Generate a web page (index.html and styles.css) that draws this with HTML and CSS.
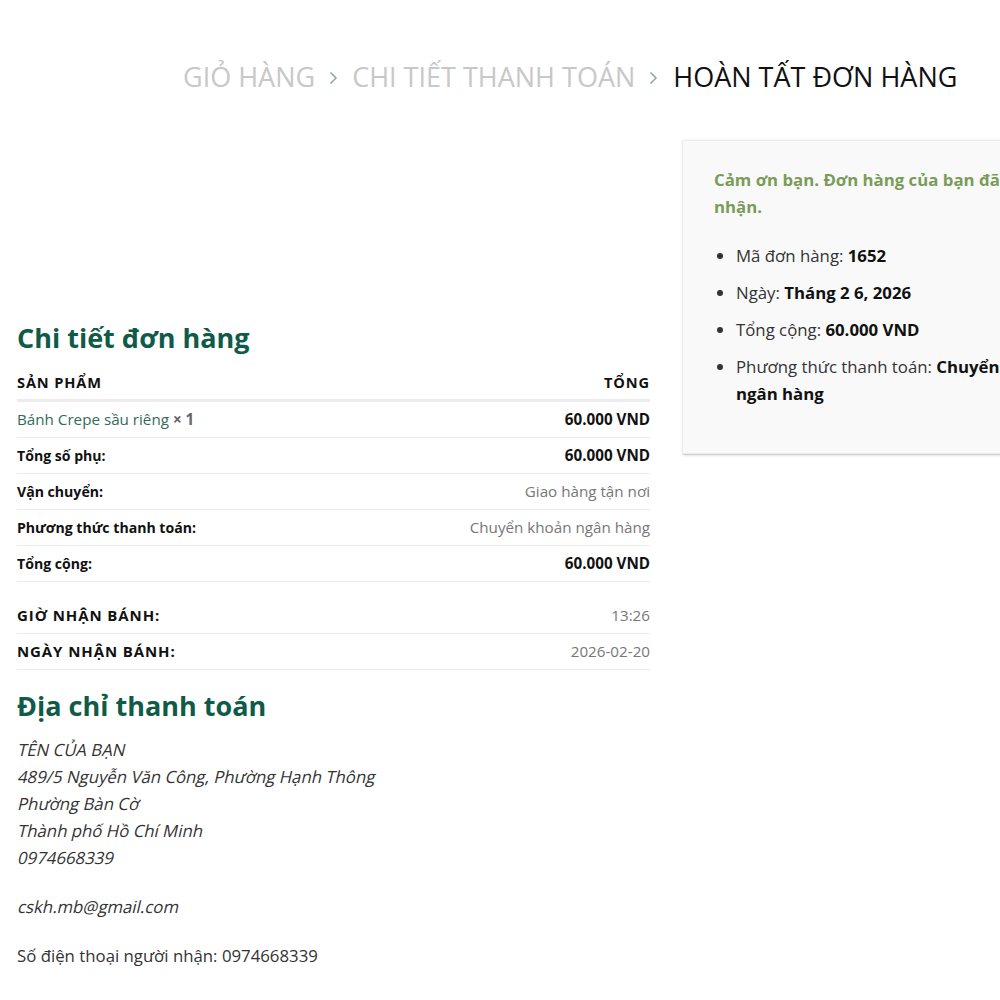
FILE: index.html
```html
<!DOCTYPE html>
<html lang="vi">
<head>
<meta charset="utf-8">
<title>Hoàn tất đơn hàng</title>
<link rel="stylesheet" href="styles.css">
</head>
<body>
<div class="page">
  <nav class="breadcrumbs">
    <span class="crumb">Giỏ hàng</span>
    <svg class="sep" width="9" height="14" viewBox="0 0 9 14" aria-hidden="true"><path d="M1.5 1.5 L7 7 L1.5 12.5" fill="none" stroke="currentColor" stroke-width="1.5"/></svg>
    <span class="crumb">Chi tiết thanh toán</span>
    <svg class="sep" width="9" height="14" viewBox="0 0 9 14" aria-hidden="true"><path d="M1.5 1.5 L7 7 L1.5 12.5" fill="none" stroke="currentColor" stroke-width="1.5"/></svg>
    <span class="crumb current">Hoàn tất đơn hàng</span>
  </nav>

  <div class="row">
    <div class="col-main">
      <section class="order-details">
        <h2 class="section-title">Chi tiết đơn hàng</h2>
        <table class="order-table">
          <thead>
            <tr><th class="left">Sản phẩm</th><th class="right">Tổng</th></tr>
          </thead>
          <tbody>
            <tr>
              <td class="product"><a href="#">Bánh Crepe sầu riêng</a> <strong class="qty">&times;&nbsp;1</strong></td>
              <td class="right"><strong>60.000 VND</strong></td>
            </tr>
          </tbody>
          <tfoot>
            <tr><th class="foot-label">Tổng số phụ:</th><td class="right"><strong>60.000 VND</strong></td></tr>
            <tr><th class="foot-label">Vận chuyển:</th><td class="right muted">Giao hàng tận nơi</td></tr>
            <tr><th class="foot-label">Phương thức thanh toán:</th><td class="right muted">Chuyển khoản ngân hàng</td></tr>
            <tr><th class="foot-label">Tổng cộng:</th><td class="right"><strong>60.000 VND</strong></td></tr>
          </tfoot>
        </table>

        <table class="extra-table">
          <tr><th class="left">Giờ nhận bánh:</th><td class="right muted">13:26</td></tr>
          <tr><th class="left">Ngày nhận bánh:</th><td class="right muted">2026-02-20</td></tr>
        </table>
      </section>

      <section class="billing">
        <h2 class="section-title">Địa chỉ thanh toán</h2>
        <address class="address">
          <span class="line">TÊN CỦA BẠN</span>
          <span class="line">489/5 Nguyễn Văn Công, Phường Hạnh Thông</span>
          <span class="line">Phường Bàn Cờ</span>
          <span class="line">Thành phố Hồ Chí Minh</span>
          <span class="line">0974668339</span>
          <span class="line email">cskh.mb@gmail.com</span>
        </address>
        <p class="phone">Số điện thoại người nhận: 0974668339</p>
      </section>
    </div>

    <aside class="col-side">
      <div class="well">
        <p class="thanks">Cảm ơn bạn. Đơn hàng của bạn đã được nhận.</p>
        <ul class="overview">
          <li>Mã đơn hàng: <strong>1652</strong></li>
          <li>Ngày: <strong>Tháng 2 6, 2026</strong></li>
          <li>Tổng cộng: <strong>60.000 VND</strong></li>
          <li>Phương thức thanh toán: <strong>Chuyển khoản ngân hàng</strong></li>
        </ul>
      </div>
    </aside>
  </div>
</div>
</body>
</html>
```

FILE: styles.css
```css
html, body {
  margin: 0;
  padding: 0;
  overflow-x: hidden;
  background: #fff;
}

body {
  font-family: "Open Sans", "Noto Sans", sans-serif;
  font-size: 16.8px;
  line-height: 27px;
  color: #333;
}

.page {
  width: 1160px;
}

.breadcrumbs {
  display: flex;
  align-items: center;
  gap: 14px;
  padding: 66px 0 0 183px;
  height: 87px;
  box-sizing: border-box;
  font-size: 27px;
  line-height: 28px;
  text-transform: uppercase;
  white-space: nowrap;
}

.crumb {
  color: #c8c8c8;
}

.crumb.current {
  color: #111;
  margin-left: 1px;
}

.sep {
  color: #8fa89d;
  flex: none;
  margin-top: 2px;
}

.row {
  display: flex;
  align-items: flex-start;
  gap: 32px;
  padding: 0 0 0 17px;
  margin-top: 53px;
}

.col-main {
  width: 633px;
  flex: none;
}

.col-side {
  width: 426px;
  flex: none;
}

.section-title {
  margin: 0;
  font-size: 27px;
  line-height: 36px;
  font-weight: 700;
  color: #0f5b47;
}

.order-details .section-title {
  margin-top: 180px;
}

table {
  width: 100%;
  border-collapse: collapse;
  border-spacing: 0;
}

th, td {
  padding: 8px 0;
  line-height: 19px;
  border-bottom: 1px solid #ececec;
  vertical-align: middle;
}

.left { text-align: left; }
.right { text-align: right; }

.order-table {
  margin-top: 12px;
}

.order-table thead th {
  font-size: 14.6px;
  font-weight: 700;
  letter-spacing: 0.06em;
  text-transform: uppercase;
  color: #111;
  border-bottom: 3px solid #ececec;
  padding: 5px 0 7px;
}

.order-table td {
  font-size: 15.2px;
  color: #111;
}

.product a {
  color: #336b5a;
  text-decoration: none;
}

.qty {
  color: #666;
}

.foot-label {
  text-align: left;
  font-size: 14.1px;
  font-weight: 700;
  color: #111;
}

.muted {
  color: #777 !important;
  font-weight: 400;
}

.extra-table {
  margin-top: 16px;
}

.extra-table th {
  font-size: 15px;
  font-weight: 700;
  letter-spacing: 0.06em;
  text-transform: uppercase;
  color: #111;
}

.extra-table td {
  font-size: 15.2px;
}

.billing {
  margin-top: 18px;
}

.address {
  display: block;
  margin-top: 12px;
  font-style: normal;
  color: #333;
}

.address .line {
  display: block;
  transform: skewX(-13deg);
  transform-origin: 0 20px;
  white-space: nowrap;
}

.address .email {
  margin-top: 22px;
}

.phone {
  margin: 22px 0 0;
}

.well {
  padding: 26px 30px 37px 32px;
  background: #f9f9f9;
  box-shadow: 1px 1px 3px 0 rgba(0,0,0,.2), 0 1px 0 rgba(0,0,0,.07), inset 0 0 0 1px rgba(0,0,0,.05);
}

.thanks {
  margin: 0 0 22px;
  font-weight: 700;
  color: #7a9c59;
}

.overview {
  margin: 0;
  padding-left: 22px;
}

.overview li {
  margin-bottom: 10px;
}

.overview strong {
  color: #111;
}
```
